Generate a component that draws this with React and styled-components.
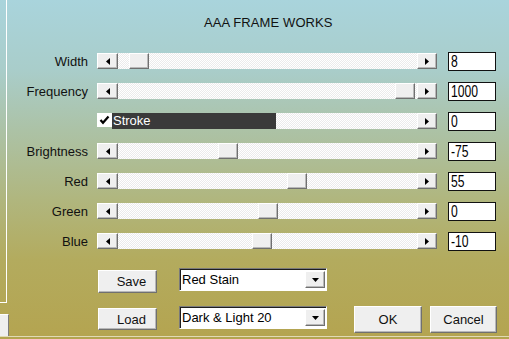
import React from 'react';
import styled, { createGlobalStyle } from 'styled-components';

const Global = createGlobalStyle`
  html, body { margin: 0; padding: 0; }
  body { font-family: "Liberation Sans", Arial, sans-serif; }
`;

const Window = styled.div`
  width: 509px;
  height: 339px;
  overflow: hidden;
  display: flex;
  flex-direction: column;
  font-size: 13px;
  color: #111;
  background: linear-gradient(180deg, #a9d4dc 0px, #a9cdca 70px, #acc2a6 130px, #b0b67e 200px, #b3ab5e 260px, #b4a450 339px);
`;

const Body = styled.div`
  display: flex;
  height: 336px;
  flex-shrink: 0;
`;

const BottomLine = styled.div`
  height: 1px;
  background: #e0dbb6;
`;

const LeftStrip = styled.div`
  width: 10px;
  flex-shrink: 0;
  display: flex;
  flex-direction: column;
`;

const EdgePanel = styled.div`
  width: 6px;
  height: 302px;
  border-right: 1px solid #fff;
  border-bottom: 1px solid #fff;
`;

const StubButton = styled.div`
  margin-top: 11px;
  width: 8px;
  height: 21px;
  background: #efefef;
  border-right: 1px solid #7c7c7c;
  border-top: 1px solid #fff;
`;

const Main = styled.div`
  flex: 1;
  display: flex;
  flex-direction: column;
`;

const Title = styled.div`
  height: 46px;
  box-sizing: border-box;
  padding: 15px 0 0 194px;
  line-height: 15px;
  font-size: 13px;
  color: #111;
  letter-spacing: 0.1px;
`;

const Row = styled.div`
  height: 30px;
  display: flex;
  align-items: center;
`;

const Label = styled.div`
  width: 78px;
  text-align: right;
  line-height: 15px;
`;

const ScrollBar = styled.div`
  margin-left: 9px;
  width: 340px;
  height: 16px;
  display: flex;
`;

const raised = `
  box-sizing: border-box;
  background: #efefef;
  border: 1px solid;
  border-color: #ffffff #707070 #707070 #ffffff;
  box-shadow: inset -1px -1px 0 #b8b8b8;
`;

const ArrowButton = styled.div`
  ${raised}
  width: ${(p) => p.$w || 20}px;
  height: 16px;
  flex-shrink: 0;
  display: flex;
  align-items: center;
  justify-content: center;
`;

const Track = styled.div`
  flex: 1;
  height: 16px;
  display: flex;
  background: repeating-conic-gradient(#ffffff 0 25%, #ebebeb 0 50%) 0 0 / 2px 2px;
`;

const Thumb = styled.div`
  ${raised}
  margin-left: ${(p) => p.$pos}px;
  width: 20px;
  height: 16px;
  flex-shrink: 0;
`;

const CheckBox = styled.div`
  width: 15px;
  height: 14px;
  background: #fff;
  flex-shrink: 0;
  display: flex;
  align-items: center;
  justify-content: center;
`;

const StrokeLabel = styled.div`
  width: 164px;
  height: 16px;
  flex-shrink: 0;
  background: #3a3a3a;
  color: #fff;
  line-height: 16px;
  padding-left: 1px;
  box-sizing: border-box;
`;

const ValueBox = styled.div`
  margin-left: 11px;
  width: 48px;
  height: 19px;
  box-sizing: border-box;
  background: #fff;
  border: 1px solid #111;
  padding-left: 2px;
  overflow: hidden;
  display: flex;
  align-items: center;
`;

const ValueText = styled.span`
  display: inline-block;
  font-size: 16px;
  line-height: 17px;
  transform: scaleX(0.76);
  transform-origin: left center;
  color: #000;
`;

const Bottom = styled.div`
  padding-left: 88px;
  display: flex;
  flex-direction: column;
`;

const BottomRow = styled.div`
  display: flex;
  align-items: flex-start;
  margin-top: ${(p) => p.$top}px;
`;

const PushButton = styled.div`
  ${raised}
  margin-top: ${(p) => p.$top || 0}px;
  margin-left: ${(p) => p.$left || 0}px;
  width: ${(p) => p.$w}px;
  height: ${(p) => p.$h}px;
  padding-left: ${(p) => p.$shift || 0}px;
  display: flex;
  align-items: center;
  justify-content: center;
  font-size: 13px;
  color: #111;
`;

const Combo = styled.div`
  margin-left: 22px;
  width: 148px;
  height: 23px;
  box-sizing: border-box;
  background: #fff;
  border: 1px solid;
  border-color: #7a7a7a #ffffff #ffffff #7a7a7a;
  box-shadow: inset 1px 1px 0 #1e1e1e;
  display: flex;
  align-items: center;
  justify-content: space-between;
  padding: 1px 1px 1px 2px;
  color: #000;
`;

const ComboButton = styled.div`
  ${raised}
  width: 20px;
  height: 17px;
  display: flex;
  align-items: center;
  justify-content: center;
`;

const LeftArrow = () => (
  <svg width="4" height="7" viewBox="0 0 4 7"><polygon points="4,0 4,7 0,3.5" fill="#000" /></svg>
);
const RightArrow = () => (
  <svg width="4" height="7" viewBox="0 0 4 7"><polygon points="0,0 0,7 4,3.5" fill="#000" /></svg>
);
const DownArrow = () => (
  <svg width="7" height="4" viewBox="0 0 7 4"><polygon points="0,0 7,0 3.5,4" fill="#000" /></svg>
);
const Check = () => (
  <svg width="11" height="10" viewBox="0 0 11 10">
    <polyline points="1.5,5 4,7.8 9.5,1.5" fill="none" stroke="#000" strokeWidth="2.2" />
  </svg>
);

const sliders = [
  { label: 'Width', value: '8', pos: 11 },
  { label: 'Frequency', value: '1000', pos: 277 },
  { label: '', value: '0', stroke: true },
  { label: 'Brightness', value: '-75', pos: 100 },
  { label: 'Red', value: '55', pos: 169 },
  { label: 'Green', value: '0', pos: 140 },
  { label: 'Blue', value: '-10', pos: 134 },
];

export default function App() {
  return (
    <>
      <Global />
      <Window>
        <Body>
          <LeftStrip>
            <EdgePanel />
            <StubButton />
          </LeftStrip>
          <Main>
            <Title>AAA FRAME WORKS</Title>
            {sliders.map((s, i) => (
              <Row key={i}>
                <Label>{s.label}</Label>
                <ScrollBar>
                  {s.stroke ? (
                    <>
                      <CheckBox><Check /></CheckBox>
                      <StrokeLabel>Stroke</StrokeLabel>
                      <Track />
                    </>
                  ) : (
                    <>
                      <ArrowButton $w={21}><LeftArrow /></ArrowButton>
                      <Track><Thumb $pos={s.pos} /></Track>
                    </>
                  )}
                  <ArrowButton $w={20}><RightArrow /></ArrowButton>
                </ScrollBar>
                <ValueBox><ValueText>{s.value}</ValueText></ValueBox>
              </Row>
            ))}
            <Bottom>
              <BottomRow $top={12}>
                <PushButton $top={2} $w={59} $h={23} $shift={8}>Save</PushButton>
                <Combo>
                  <span>Red Stain</span>
                  <ComboButton><DownArrow /></ComboButton>
                </Combo>
              </BottomRow>
              <BottomRow $top={13}>
                <PushButton $top={2} $w={59} $h={22} $shift={8}>Load</PushButton>
                <Combo>
                  <span>Dark &amp; Light 20</span>
                  <ComboButton><DownArrow /></ComboButton>
                </Combo>
                <PushButton $left={27} $w={68} $h={27}>OK</PushButton>
                <PushButton $left={8} $w={67} $h={27}>Cancel</PushButton>
              </BottomRow>
            </Bottom>
          </Main>
        </Body>
        <BottomLine />
      </Window>
    </>
  );
}
